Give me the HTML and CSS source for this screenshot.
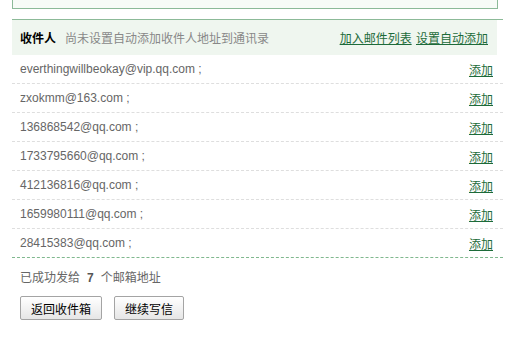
FILE: index.html
```
<html>
	<head>
		<meta name="viewport" content="width=device-width, initial-scale=1">
		<meta charset=utf-8>
		<link rel="stylesheet" href="styles.css">
		<title>发送成功</title>
	</head>
	<body>
		<div class="topbox"></div>
		<div class="panel">
			<div class="head">
				<div><b class="ttl">收件人</b><span class="tip">尚未设置自动添加收件人地址到通讯录</span></div>
				<div class="acts"><a href="#">加入邮件列表</a> <a href="#">设置自动添加</a></div>
			</div>
			<div class="row"><span class="addr">everthingwillbeokay@vip.qq.com ;</span><a href="#">添加</a></div>
			<div class="row"><span class="addr">zxokmm@163.com ;</span><a href="#">添加</a></div>
			<div class="row"><span class="addr">136868542@qq.com ;</span><a href="#">添加</a></div>
			<div class="row"><span class="addr">1733795660@qq.com ;</span><a href="#">添加</a></div>
			<div class="row"><span class="addr">412136816@qq.com ;</span><a href="#">添加</a></div>
			<div class="row"><span class="addr">1659980111@qq.com ;</span><a href="#">添加</a></div>
			<div class="row last"><span class="addr">28415383@qq.com ;</span><a href="#">添加</a></div>
			<div class="sent">已成功发给<b>7</b>个邮箱地址</div>
			<div class="btns">
				<button class="btn">返回收件箱</button>
				<button class="btn">继续写信</button>
			</div>
		</div>
	</body>
</html>
```
FILE: styles.css
```
body{
	margin:0px;
	font-family:"Liberation Sans","Noto Sans CJK SC",sans-serif;
	font-size:12px;
	color:#000;
	background:#fff;
}
a{
	color:#1d6b3a;
	text-decoration:underline;
}
.topbox{
	margin-left:12px;
	width:484px;
	height:8px;
	border:1px solid #8cba98;
	border-top:none;
	background:#f7fbf7;
}
.panel{
	margin-top:10px;
	margin-left:12px;
	width:491px;
	border-top:1px solid #8cba98;
}
.head{
	display:flex;
	justify-content:space-between;
	align-items:center;
	height:35px;
	margin-right:6px;
	padding:0px 9px 0px 8px;
	background:#eff6ef;
}
.ttl{
	font-weight:bold;
	margin-right:9px;
}
.tip{
	color:#888;
}
.acts a{
	margin-left:1px;
}
.row{
	display:flex;
	justify-content:space-between;
	align-items:center;
	height:28px;
	padding:0px 10px 0px 8px;
	border-bottom:1px dashed #dedede;
}
.row.last{
	border-bottom:1px dashed #80b88e;
}
.addr{
	color:#666;
}
.sent{
	color:#666;
	padding:12px 0px 0px 8px;
	height:18px;
	line-height:16px;
}
.sent b{
	color:#555;
	margin:0px 7px;
}
.btns{
	display:flex;
	gap:12px;
	padding:8px 0px 0px 8px;
}
.btn{
	height:24px;
	padding:0px 10px;
	font-family:"Liberation Sans","Noto Sans CJK SC",sans-serif;
	font-size:12px;
	color:#000;
	border:1px solid #a4a4a4;
	border-radius:2px;
	background:linear-gradient(#ffffff,#e6e6e6);
}
```
